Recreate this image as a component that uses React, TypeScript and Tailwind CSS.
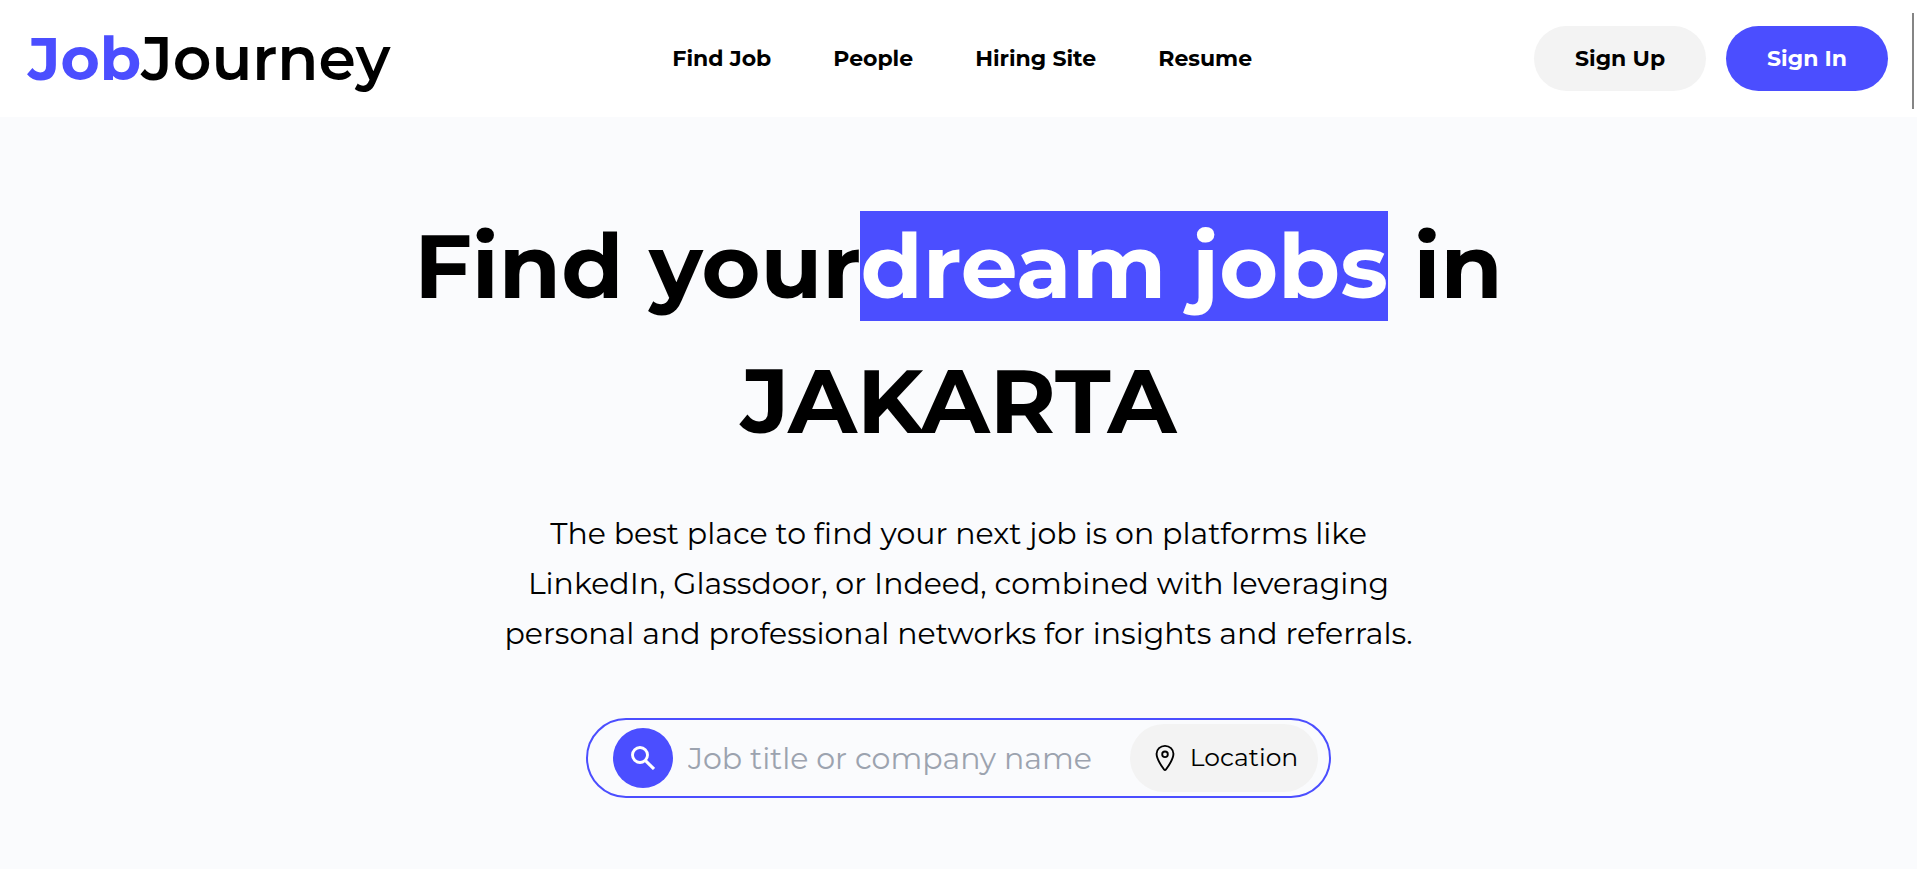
import { IoLocationOutline } from "react-icons/io5";

const links = ["Find Job", "People", "Hiring Site", "Resume"];

function SearchIcon() {
  return (
    <svg width="24" height="24" viewBox="0 0 24 24" fill="none" stroke="currentColor" aria-hidden="true">
      <circle cx="9" cy="9" r="7.5" strokeWidth="2.9" />
      <path d="M14 14.2 23 23" strokeWidth="3.1" />
    </svg>
  );
}

function Header() {
  return (
    <header className="flex items-center justify-between bg-white py-[26px] pr-[29px] pl-7">
      <a href="#" className="text-[60px] leading-[65px] font-semibold">
        <span className="font-bold text-[#4b4eff]">Job</span>Journey
      </a>
      <nav className="flex gap-[62px]">
        {links.map((label) => (
          <a key={label} href="#" className="text-[22px] leading-8 font-bold">
            {label}
          </a>
        ))}
      </nav>
      <div className="flex gap-5">
        <button className="h-[65px] rounded-full bg-[#f3f3f3] px-[41px] text-[22px] font-bold">Sign Up</button>
        <button className="h-[65px] rounded-full bg-[#4b4eff] px-[41px] text-[22px] font-bold text-white">Sign In</button>
      </div>
    </header>
  );
}

function SearchBar() {
  return (
    <form className="mt-[59px] flex h-20 w-full max-w-[745px] items-center rounded-full border-2 border-[#4b4eff] pr-[11px] pl-[25px]">
      <button
        type="button"
        aria-label="Search"
        className="flex size-[60px] shrink-0 items-center justify-center rounded-full bg-[#4b4eff] text-white"
      >
        <SearchIcon />
      </button>
      <input
        type="text"
        aria-label="Job title or company name"
        placeholder="Job title or company name"
        className="ml-[15px] min-w-0 flex-1 bg-transparent text-[30px] outline-none placeholder:text-[#9ca3af]"
      />
      <button type="button" className="flex h-[68px] w-[188px] shrink-0 items-center justify-center gap-[10px] rounded-full bg-[#f3f3f3] text-[25px]">
        <IoLocationOutline size={30} />
        Location
      </button>
    </form>
  );
}

export default function App() {
  return (
    <div className="relative min-h-screen bg-[#fafbfd] font-['Montserrat','Inter',sans-serif] text-black">
      <Header />
      <main className="flex flex-col items-center px-6 pt-[82px] pb-[70px] text-center">
        <h1 className="max-w-[1200px] text-[90px] leading-[135px] font-bold">
          Find your<span className="bg-[#4b4eff] text-white">dream jobs</span> in JAKARTA
        </h1>
        <p className="mt-10 max-w-[930px] text-[30px] leading-[50px]">
          The best place to find your next job is on platforms like LinkedIn, Glassdoor, or Indeed, combined with
          leveraging personal and professional networks for insights and referrals.
        </p>
        <SearchBar />
      </main>
      <div className="absolute top-[13px] right-[3px] h-24 w-[2px] bg-[#858585]" />
    </div>
  );
}
